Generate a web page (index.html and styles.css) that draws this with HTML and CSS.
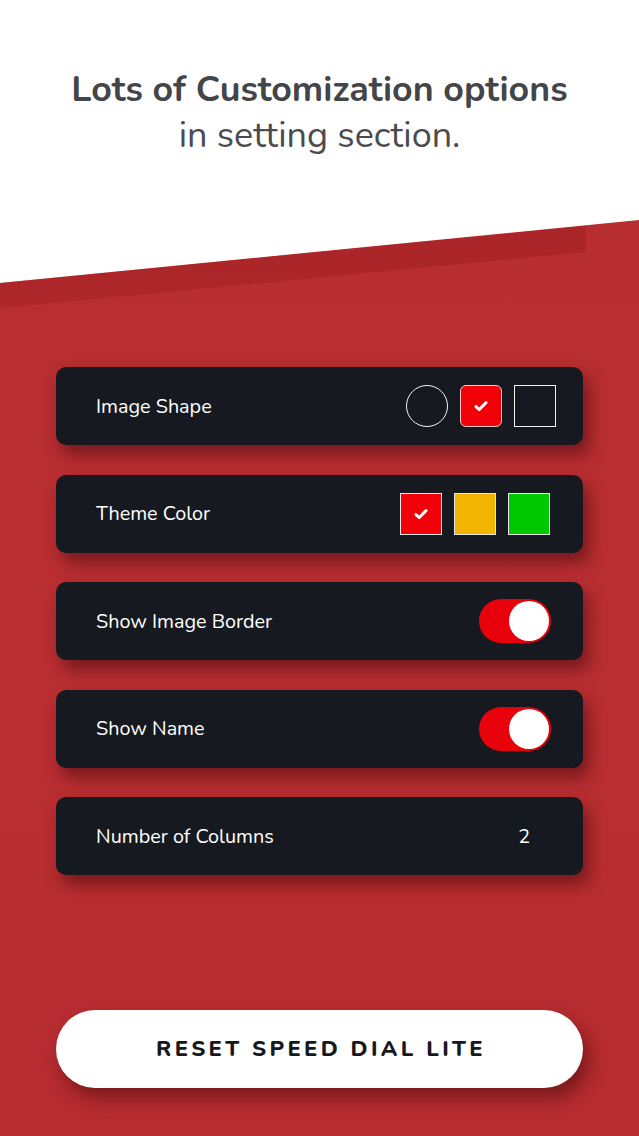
FILE: index.html
```html
<!DOCTYPE html>
<html>
<head>
<meta charset="utf-8">
<link rel="stylesheet" href="styles.css">
</head>
<body>
<div class="page">
  <div class="backdrop"></div>
  <div class="band"></div>
  <header class="hero">
    <h1 class="title">Lots of Customization options</h1>
    <p class="subtitle">in setting section.</p>
  </header>
  <main class="settings">
    <div class="card">
      <span class="label">Image Shape</span>
      <div class="opts">
        <span class="shape circle"></span>
        <span class="shape rounded selected"><svg viewBox="0 0 16 16" class="check"><path d="M3.5 8.5 L6.5 11.2 L12.5 5" fill="none" stroke="#fff" stroke-width="2.6" stroke-linecap="round" stroke-linejoin="round"/></svg></span>
        <span class="shape square"></span>
      </div>
    </div>
    <div class="card">
      <span class="label">Theme Color</span>
      <div class="opts">
        <span class="swatch red"><svg viewBox="0 0 16 16" class="check"><path d="M3.5 8.5 L6.5 11.2 L12.5 5" fill="none" stroke="#fff" stroke-width="2.6" stroke-linecap="round" stroke-linejoin="round"/></svg></span>
        <span class="swatch yellow"></span>
        <span class="swatch green"></span>
      </div>
    </div>
    <div class="card">
      <span class="label">Show Image Border</span>
      <span class="toggle"><span class="knob"></span></span>
    </div>
    <div class="card">
      <span class="label">Show Name</span>
      <span class="toggle"><span class="knob"></span></span>
    </div>
    <div class="card">
      <span class="label">Number of Columns</span>
      <span class="value">2</span>
    </div>
  </main>
  <footer class="actions">
    <button class="reset">RESET SPEED DIAL LITE</button>
  </footer>
</div>
</body>
</html>
```
FILE: styles.css
```css
* { box-sizing: border-box; }
html, body { margin: 0; padding: 0; background: #fff; }
body { font-family: "Nunito", Lato, "Noto Sans", sans-serif; }
.page {
  position: relative;
  width: 639px;
  height: 1136px;
  overflow: hidden;
  display: flex;
  flex-direction: column;
  align-items: center;
}
.backdrop {
  position: absolute;
  inset: 0;
  background: linear-gradient(180deg, #b62d30 0%, #b92e31 60%, #b72c30 100%);
  clip-path: polygon(0 283px, 100% 220px, 100% 100%, 0 100%);
}
.band {
  position: absolute;
  left: 0; top: 0;
  width: 586px; height: 320px;
  background: linear-gradient(180deg, rgba(150,28,30,0.75), rgba(160,30,32,0.35));
  clip-path: polygon(0 283px, 586px 226px, 586px 252px, 0 308px);
  filter: blur(1px);
}
.hero {
  position: relative;
  text-align: center;
  padding-top: 67px;
  color: #444548;
}
.title {
  margin: 0;
  font-size: 35.8px;
  font-weight: 700;
  line-height: 46px;
}
.subtitle {
  margin: 0;
  font-size: 36px;
  font-weight: 400;
  line-height: 46px;
  color: #4a4b4e;
}
.settings {
  position: relative;
  margin-top: 208px;
  display: flex;
  flex-direction: column;
  gap: 29.5px;
  width: 527px;
}
.card {
  height: 78px;
  background: #161a20;
  border-radius: 10px;
  display: flex;
  align-items: center;
  justify-content: space-between;
  padding: 0 27px 0 40px;
  box-shadow: 6px 10px 16px rgba(70, 10, 12, 0.55);
  color: #fff;
}
.label { font-size: 19.8px; }
.opts { display: flex; gap: 12px; align-items: center; }
.shape {
  width: 42px; height: 42px;
  border: 1.5px solid #f2f2f2;
  display: flex; align-items: center; justify-content: center;
}
.circle { border-radius: 50%; }
.rounded { border-radius: 6px; }
.selected { background: #f20008; border-color: #f6c7c7; }
.square { border-radius: 0; }
.check { width: 18px; height: 18px; }
.swatch {
  width: 42px; height: 42px;
  border: 1.5px solid #e8e8e8;
  display: flex; align-items: center; justify-content: center;
}
.card:nth-child(2) .opts { margin-right: 6px; }
.red { background: #f1000a; }
.yellow { background: #f2b400; }
.green { background: #00c800; }
.toggle {
  width: 72px; height: 44px;
  border-radius: 22px;
  background: #e8000b;
  display: flex;
  align-items: center;
  justify-content: flex-end;
  padding-right: 2px;
  margin-right: 5px;
}
.knob {
  width: 40px; height: 40px;
  border-radius: 50%;
  background: #fff;
}
.value { font-size: 19.8px; margin-right: 26px; }
.actions {
  position: relative;
  margin-top: 135px;
  width: 527px;
}
.reset {
  width: 100%;
  height: 78px;
  border: none;
  border-radius: 39px;
  background: #fff;
  color: #17181b;
  font-family: inherit;
  font-size: 22px;
  font-weight: 800;
  letter-spacing: 3.35px;
  box-shadow: 6px 10px 18px rgba(70, 10, 12, 0.55);
  padding: 0 0 0 3px;
}
```
